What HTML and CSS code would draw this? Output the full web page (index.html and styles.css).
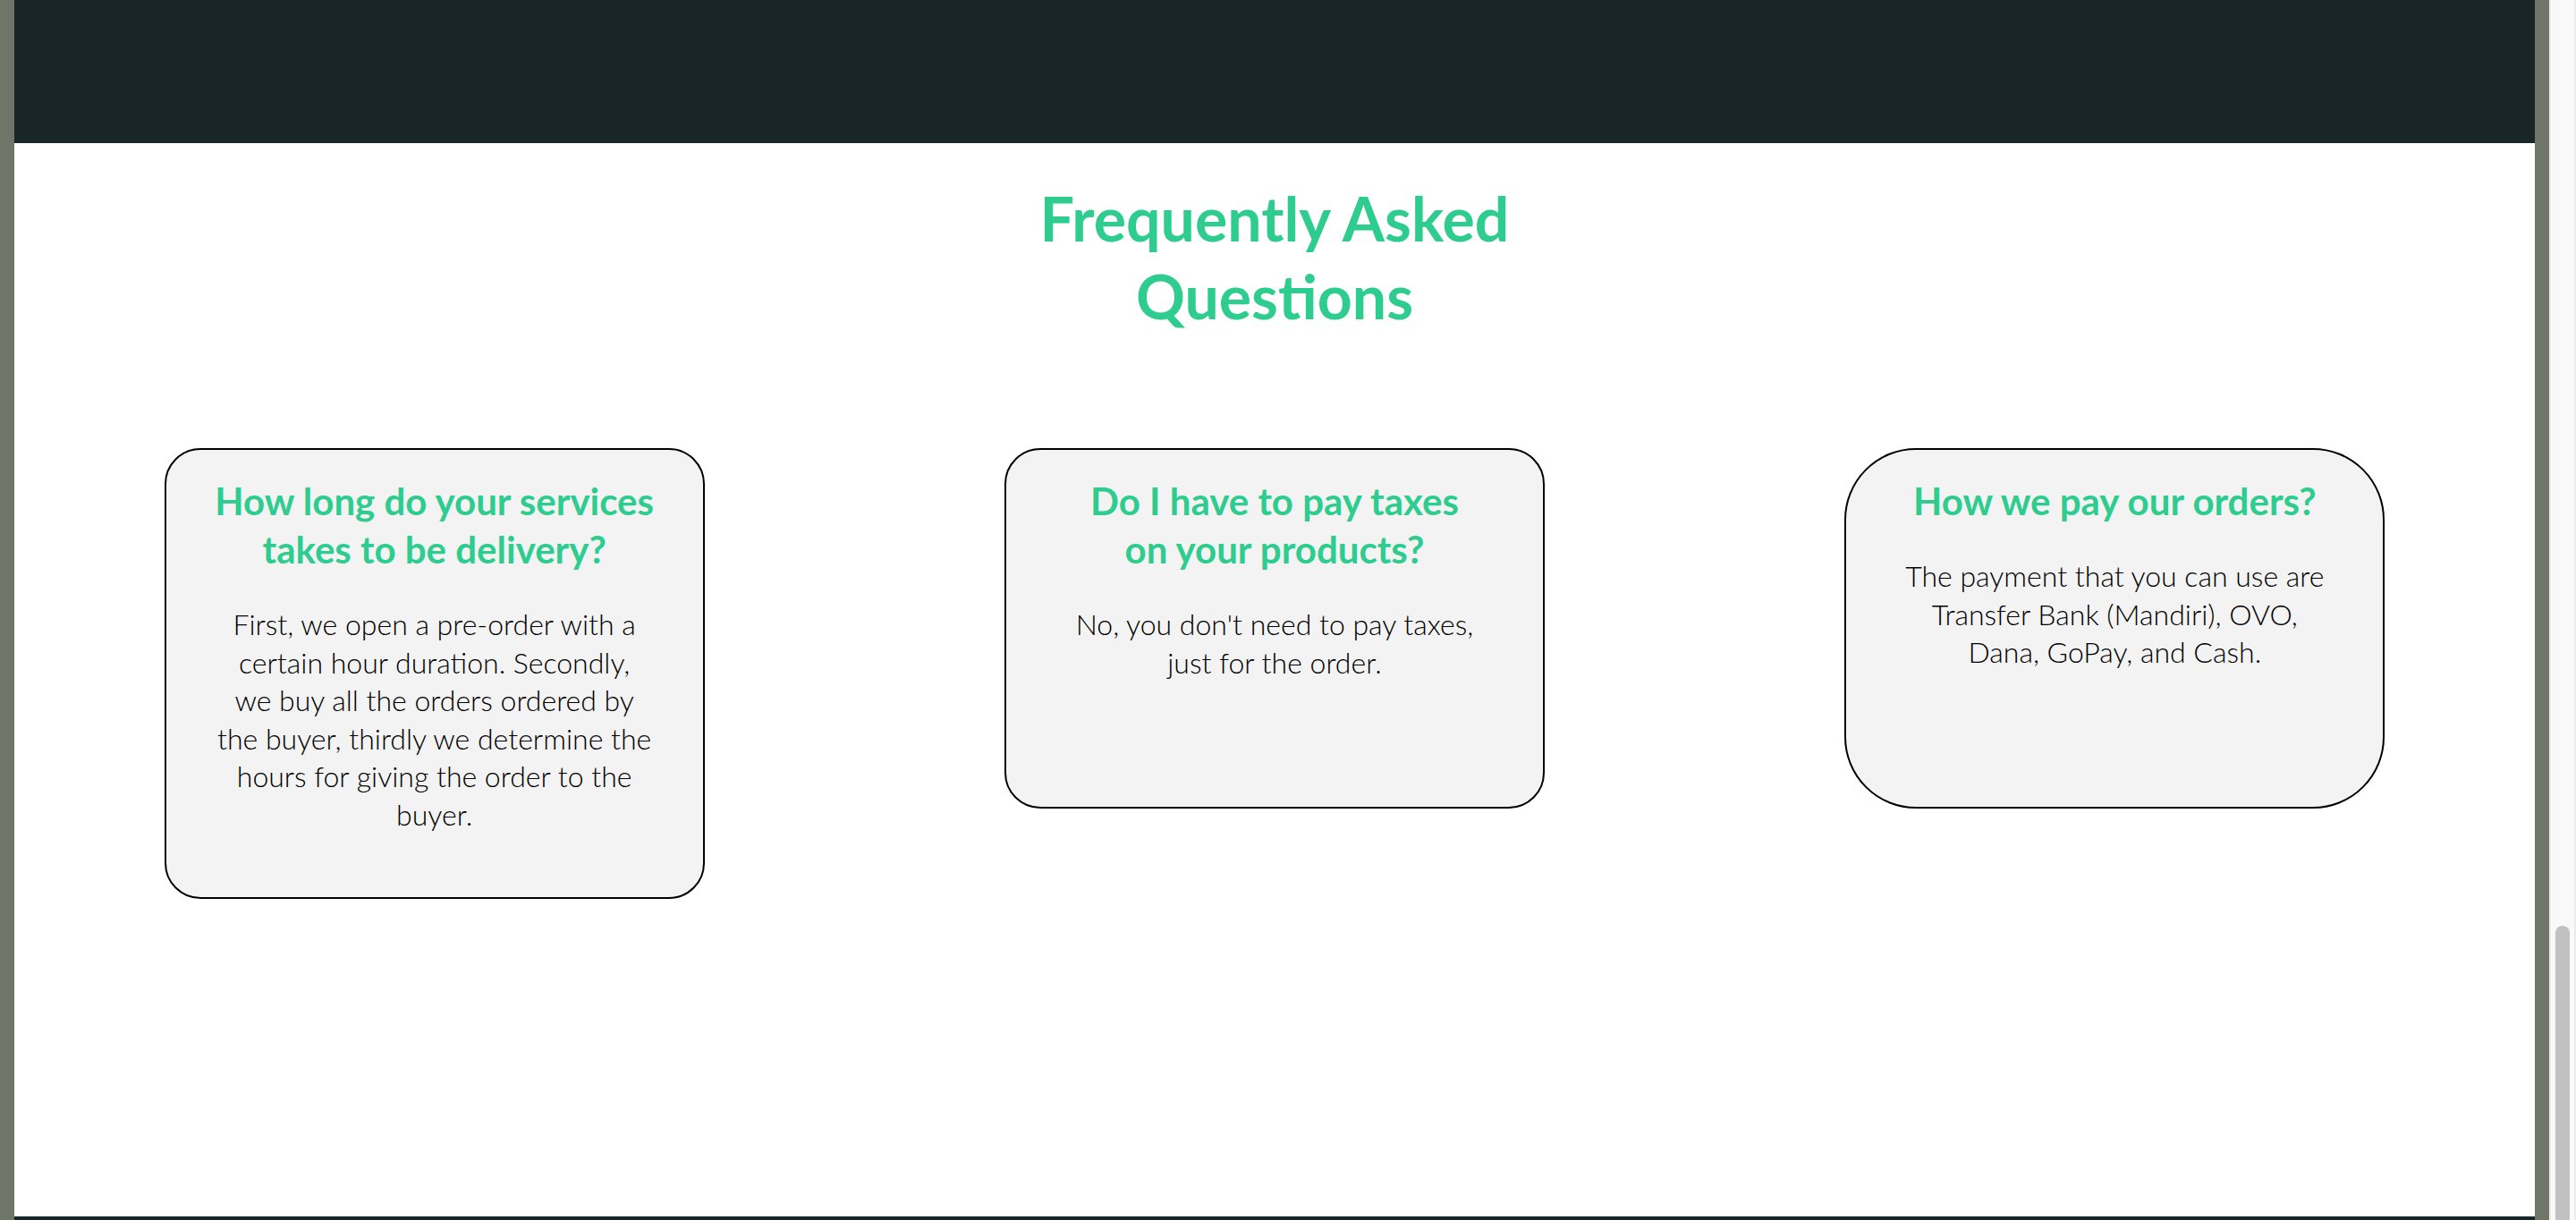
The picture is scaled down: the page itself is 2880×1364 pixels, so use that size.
FILE: index.html
```html
<!DOCTYPE html>
<html lang="en">
<head>
<meta charset="utf-8">
<title>FAQ</title>
<link rel="stylesheet" href="styles.css">
</head>
<body>
  <div class="page">
    <header class="topbar"></header>
    <section class="faq">
      <h2 class="faq-title">Frequently Asked<br>Questions</h2>
      <div class="faq-cards">
        <article class="card">
          <h3 class="card-q">How long do your services<br>takes to be delivery?</h3>
          <p class="card-a">First, we open a pre-order with a<br>certain hour duration. Secondly,<br>we buy all the orders ordered by<br>the buyer, thirdly we determine the<br>hours for giving the order to the<br>buyer.</p>
        </article>
        <article class="card">
          <h3 class="card-q">Do I have to pay taxes<br>on your products?</h3>
          <p class="card-a">No, you don't need to pay taxes,<br>just for the order.</p>
        </article>
        <article class="card card-round">
          <h3 class="card-q">How we pay our orders?</h3>
          <p class="card-a">The payment that you can use are<br>Transfer Bank (Mandiri), OVO,<br>Dana, GoPay, and Cash.</p>
        </article>
      </div>
    </section>
    <footer class="footer-edge"></footer>
  </div>
  <div class="scrollbar"><div class="scrollbar-thumb"></div></div>
</body>
</html>
```
FILE: styles.css
```css
* { box-sizing: border-box; }

html, body {
  margin: 0;
  height: 1364px;
  overflow: hidden;
}

body {
  display: flex;
  background: #6f7667;
  font-family: "Lato", "Noto Sans", sans-serif;
}

.page {
  flex: 1;
  padding: 0 16px;
  display: flex;
  flex-direction: column;
}

.topbar {
  height: 160px;
  background: #192627;
  flex: none;
}

.faq {
  flex: 1;
  background: #ffffff;
  padding-top: 40px;
}

.faq-title {
  margin: 0;
  text-align: center;
  color: #2ecc8e;
  font-size: 68px;
  line-height: 87px;
  font-weight: 700;
}

.faq-cards {
  margin-top: 127px;
  display: flex;
  justify-content: space-around;
  align-items: flex-start;
}

.card {
  width: 604px;
  min-height: 403px;
  background: #f3f3f3;
  border: 2px solid #000;
  border-radius: 40px;
  padding: 30px 30px 70px;
  text-align: center;
}

.card-round {
  border-radius: 80px;
}

.card-q {
  margin: 0;
  color: #2ecc8e;
  font-size: 42px;
  line-height: 54px;
  font-weight: 700;
}

.card-a {
  margin: 36px 0 0;
  color: #000;
  font-size: 32px;
  line-height: 42.6px;
  font-weight: 300;
}

.footer-edge {
  height: 4px;
  background: #192627;
  flex: none;
}

.scrollbar {
  width: 30px;
  flex: none;
  background: #f9f9f9;
  border-left: 2px solid #ebebeb;
  border-right: 2px solid #ebebeb;
  display: flex;
  flex-direction: column;
  justify-content: flex-end;
  align-items: center;
}

.scrollbar-thumb {
  width: 16px;
  height: 329px;
  background: #c1c1c1;
  border-radius: 8px 8px 0 0;
}
```
